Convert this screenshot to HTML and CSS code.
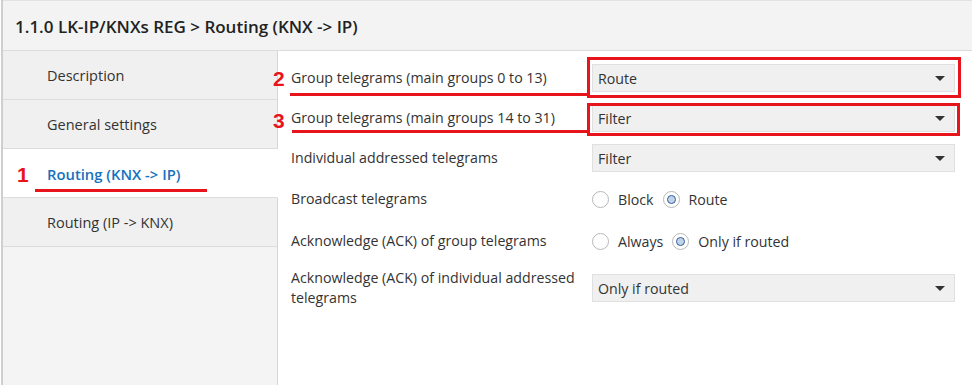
FILE: index.html
```html
<!DOCTYPE html>
<html>
<head>
<meta charset="utf-8">
<link rel="stylesheet" href="styles.css">
</head>
<body>
<div class="app">
  <header class="title-bar">1.1.0 LK-IP/KNXs REG &gt; Routing (KNX -&gt; IP)</header>
  <div class="content">
    <nav class="sidebar">
      <div class="nav-item">Description</div>
      <div class="nav-item">General settings</div>
      <div class="nav-item active">Routing (KNX -&gt; IP)
        <span class="mark mark-num mark-1">1</span>
        <span class="mark mark-line mark-line-1"></span>
      </div>
      <div class="nav-item">Routing (IP -&gt; KNX)</div>
      <div class="nav-rest"></div>
    </nav>
    <main class="params">
      <div class="row">
        <div class="label">Group telegrams (main groups 0 to 13)</div>
        <div class="select"><span>Route</span><i class="caret"></i></div>
        <span class="mark mark-num mark-2">2</span>
        <span class="mark mark-line mark-line-2"></span>
        <span class="mark mark-box mark-box-2"></span>
      </div>
      <div class="row">
        <div class="label">Group telegrams (main groups 14 to 31)</div>
        <div class="select"><span>Filter</span><i class="caret"></i></div>
        <span class="mark mark-num mark-3">3</span>
        <span class="mark mark-line mark-line-3"></span>
        <span class="mark mark-box mark-box-3"></span>
      </div>
      <div class="row">
        <div class="label">Individual addressed telegrams</div>
        <div class="select"><span>Filter</span><i class="caret"></i></div>
      </div>
      <div class="row radio-row">
        <div class="label">Broadcast telegrams</div>
        <div class="radios">
          <span class="radio"></span><span class="radio-text">Block</span>
          <span class="radio checked"></span><span class="radio-text">Route</span>
        </div>
      </div>
      <div class="row radio-row">
        <div class="label">Acknowledge (ACK) of group telegrams</div>
        <div class="radios">
          <span class="radio"></span><span class="radio-text">Always</span>
          <span class="radio checked"></span><span class="radio-text">Only if routed</span>
        </div>
      </div>
      <div class="row tall-row">
        <div class="label">Acknowledge (ACK) of individual addressed telegrams</div>
        <div class="select"><span>Only if routed</span><i class="caret"></i></div>
      </div>
    </main>
  </div>
</div>
</body>
</html>
```

FILE: styles.css
```css
* { box-sizing: border-box; }
html, body { margin: 0; padding: 0; background: #fff; }
body {
  font-family: "Open Sans", "Noto Sans", sans-serif;
  font-size: 14.2px;
  color: #333;
}
.app {
  margin-left: 1px;
  border-left: 2px solid #cfcfcf;
  height: 385px;
  display: flex;
  flex-direction: column;
}
.title-bar {
  height: 51px;
  background: #f3f3f3;
  border-top: 1px solid #e2e2e2;
  border-bottom: 1px solid #dcdcdc;
  display: flex;
  align-items: center;
  padding-left: 12px;
  padding-top: 2px;
  font-size: 17px;
  font-weight: 600;
  color: #222;
}
.content {
  flex: 1;
  display: flex;
}
.sidebar {
  width: 275px;
  display: flex;
  flex-direction: column;
  font-size: 14.5px;
}
.nav-item {
  position: relative;
  height: 49px;
  background: #f0f0f0;
  border-bottom: 1px solid #dcdcdc;
  border-right: 1px solid #d6d6d6;
  display: flex;
  align-items: center;
  padding-left: 44px;
  padding-top: 1px;
}
.nav-item.active {
  background: #fff;
  border-right-color: #fff;
  color: #1672bd;
  font-weight: 600;
  font-size: 14.8px;
}
.nav-rest {
  flex: 1;
  background: #f4f4f4;
  border-right: 1px solid #d6d6d6;
}
.params {
  flex: 1;
  padding: 13px 17px 0 13px;
  display: flex;
  flex-direction: column;
  gap: 12px;
}
.row {
  position: relative;
  display: grid;
  grid-template-columns: 301px 363px;
  align-items: center;
  height: 28px;
}
.radio-row { height: 30px; }
.tall-row { height: 40px; }
.label { line-height: 20px; }
.select {
  height: 28px;
  background: #f0f0f0;
  border: 1px solid #e0e0e0;
  display: flex;
  align-items: center;
  justify-content: space-between;
  padding: 0 9px 0 5px;
}
.caret {
  width: 0; height: 0;
  border-left: 5px solid transparent;
  border-right: 5px solid transparent;
  border-top: 5px solid #333;
}
.radios {
  display: flex;
  align-items: center;
}
.radio {
  width: 17px; height: 17px;
  border-radius: 50%;
  border: 1px solid #b8b8b8;
  background: #fff;
  margin-right: 9px;
  position: relative;
}
.radio.checked::after {
  content: "";
  position: absolute;
  left: 3px; top: 3px;
  width: 9px; height: 9px;
  border-radius: 50%;
  border: 1.5px solid #2f5f9e;
  background: #c3d3e6;
  box-sizing: border-box;
}
.radio-text { margin-right: 9px; }

/* red annotation overlays */
.mark { position: absolute; }
.mark-num {
  color: #e8141c;
  font-family: "Liberation Sans", Arial, sans-serif;
  font-weight: 700;
  font-size: 21px;
  line-height: 1;
}
.mark-line { height: 3px; background: #e8141c; }
.mark-box { border: 3px solid #e8141c; }
.mark-1 { left: 14px; top: 15px; }
.mark-line-1 { left: 32px; top: 40px; width: 172px; }
.mark-2 { left: -18px; top: 4px; }
.mark-line-2 { left: -1px; top: 29px; width: 297px; }
.mark-box-2 { left: 296px; top: -7px; width: 374px; height: 41px; }
.mark-3 { left: -18px; top: 6px; }
.mark-line-3 { left: 1px; top: 26px; width: 295px; }
.mark-box-3 { left: 296px; top: -1px; width: 373px; height: 33px; }
```
